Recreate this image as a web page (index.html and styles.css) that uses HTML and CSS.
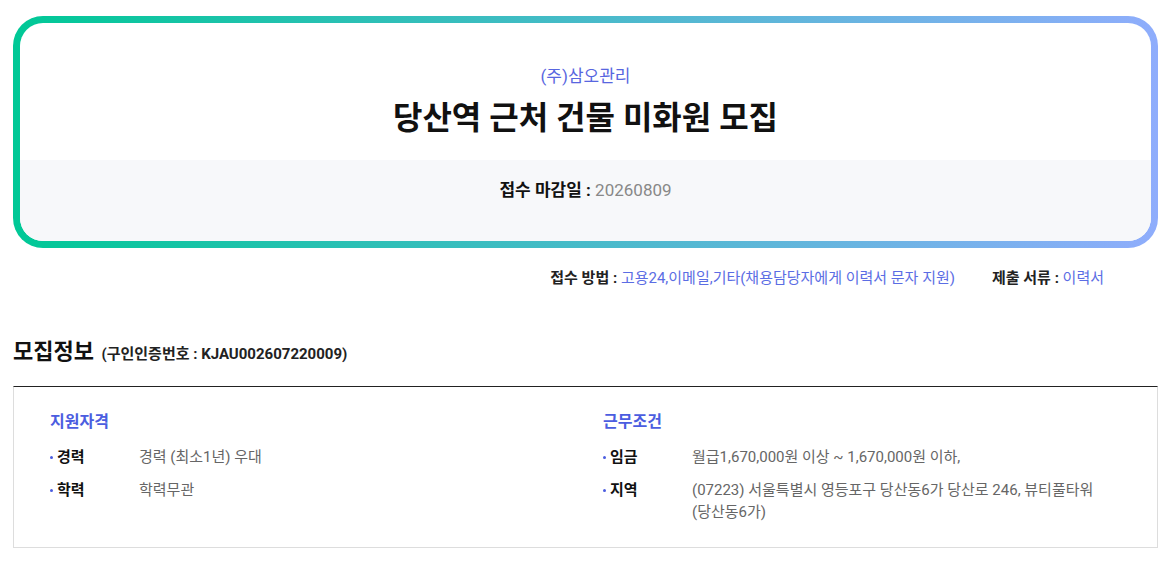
FILE: index.html
```html
<!DOCTYPE html>
<html lang="ko">
<head>
  <meta charset="UTF-8" />
  <title>채용정보</title>
  <meta name="viewport" content="width=device-width, initial-scale=1.0"/>
  <link rel="stylesheet" href="styles.css">
</head>
<body>

  <!-- 상단 공고 카드 -->
  <div class="job-card">
    <div class="job-card-inner">
      <div class="job-head">
        <p class="company">(주)삼오관리</p>
        <h1 class="job-title">당산역 근처 건물 미화원 모집</h1>
      </div>
      <div class="job-deadline">
        <strong>접수 마감일 :</strong> <span>20260809</span>
      </div>
    </div>
  </div>

  <div class="apply-info">
    <p><strong>접수 방법 :</strong> <span>고용24,이메일,기타(채용담당자에게 이력서 문자 지원)</span></p>
    <p><strong>제출 서류 :</strong> <span>이력서</span></p>
  </div>

  <!-- 모집정보 -->
  <h2 class="section-title">모집정보 <small>(구인인증번호 : KJAU002607220009)</small></h2>

  <div class="recruit-box">
    <div class="recruit-col">
      <h3>지원자격</h3>
      <dl>
        <dt>경력</dt><dd>경력 (최소1년) 우대</dd>
        <dt>학력</dt><dd>학력무관</dd>
      </dl>
    </div>
    <div class="recruit-col">
      <h3>근무조건</h3>
      <dl>
        <dt>임금</dt><dd>월급1,670,000원 이상 ~ 1,670,000원 이하,</dd>
        <dt>지역</dt><dd>(07223) 서울특별시 영등포구 당산동6가 당산로 246, 뷰티풀타워 (당산동6가)</dd>
      </dl>
    </div>
  </div>

</body>
</html>
```

FILE: styles.css
```css
body {
  margin: 16px 12px 0 13px;
  font-family: Roboto, 'Noto Sans CJK KR', sans-serif;
  color: #222;
  background: #fff;
}
p, h1, h2, h3, dl, dd { margin: 0; }

.job-card {
  background: linear-gradient(90deg, #00c896, #8fadfc);
  padding: 7px;
  border-radius: 30px;
}
.job-card-inner {
  background: #fff;
  border-radius: 23px;
  overflow: hidden;
  text-align: center;
}
.job-head {
  padding: 41px 20px 22px;
}
.company {
  font-size: 17px;
  line-height: 24px;
  color: #5866e0;
}
.job-title {
  margin-top: 10px;
  font-size: 32px;
  line-height: 40px;
  font-weight: 700;
  color: #111;
}
.job-deadline {
  background: #f7f8fa;
  height: 81px;
  box-sizing: border-box;
  padding-top: 18px;
  font-size: 17px;
  line-height: 24px;
}
.job-deadline strong { color: #111; }
.job-deadline span { color: #888; }

.apply-info {
  display: flex;
  justify-content: flex-end;
  gap: 37px;
  margin-top: 20px;
  padding-right: 54px;
  font-size: 15px;
  line-height: 20px;
}
.apply-info strong { color: #222; }
.apply-info span { color: #5b6de4; }

.section-title {
  margin-top: 49px;
  font-size: 22px;
  line-height: 30px;
  font-weight: 700;
  color: #111;
}
.section-title small {
  font-size: 15px;
  line-height: 1;
  font-weight: 700;
  color: #222;
  margin-left: 2px;
}

.recruit-box {
  margin-top: 19px;
  border: 1px solid #ddd;
  border-top: 1px solid #222;
  display: grid;
  grid-template-columns: 553px 1fr;
  padding: 23px 20px 24px 36px;
}
.recruit-col h3 {
  font-size: 16px;
  line-height: 24px;
  font-weight: 700;
  color: #4b5de0;
}
.recruit-col dl {
  margin-top: 12px;
  display: grid;
  grid-template-columns: 89px 1fr;
  row-gap: 11px;
  font-size: 15px;
  line-height: 22px;
}
.recruit-col dt {
  position: relative;
  padding-left: 7px;
  font-weight: 700;
  color: #111;
}
.recruit-col dt::before {
  content: "";
  position: absolute;
  left: 0;
  top: 10px;
  width: 3px;
  height: 3px;
  border-radius: 50%;
  background: #4b5de0;
}
.recruit-col dd {
  color: #666;
  word-break: keep-all;
}
```
